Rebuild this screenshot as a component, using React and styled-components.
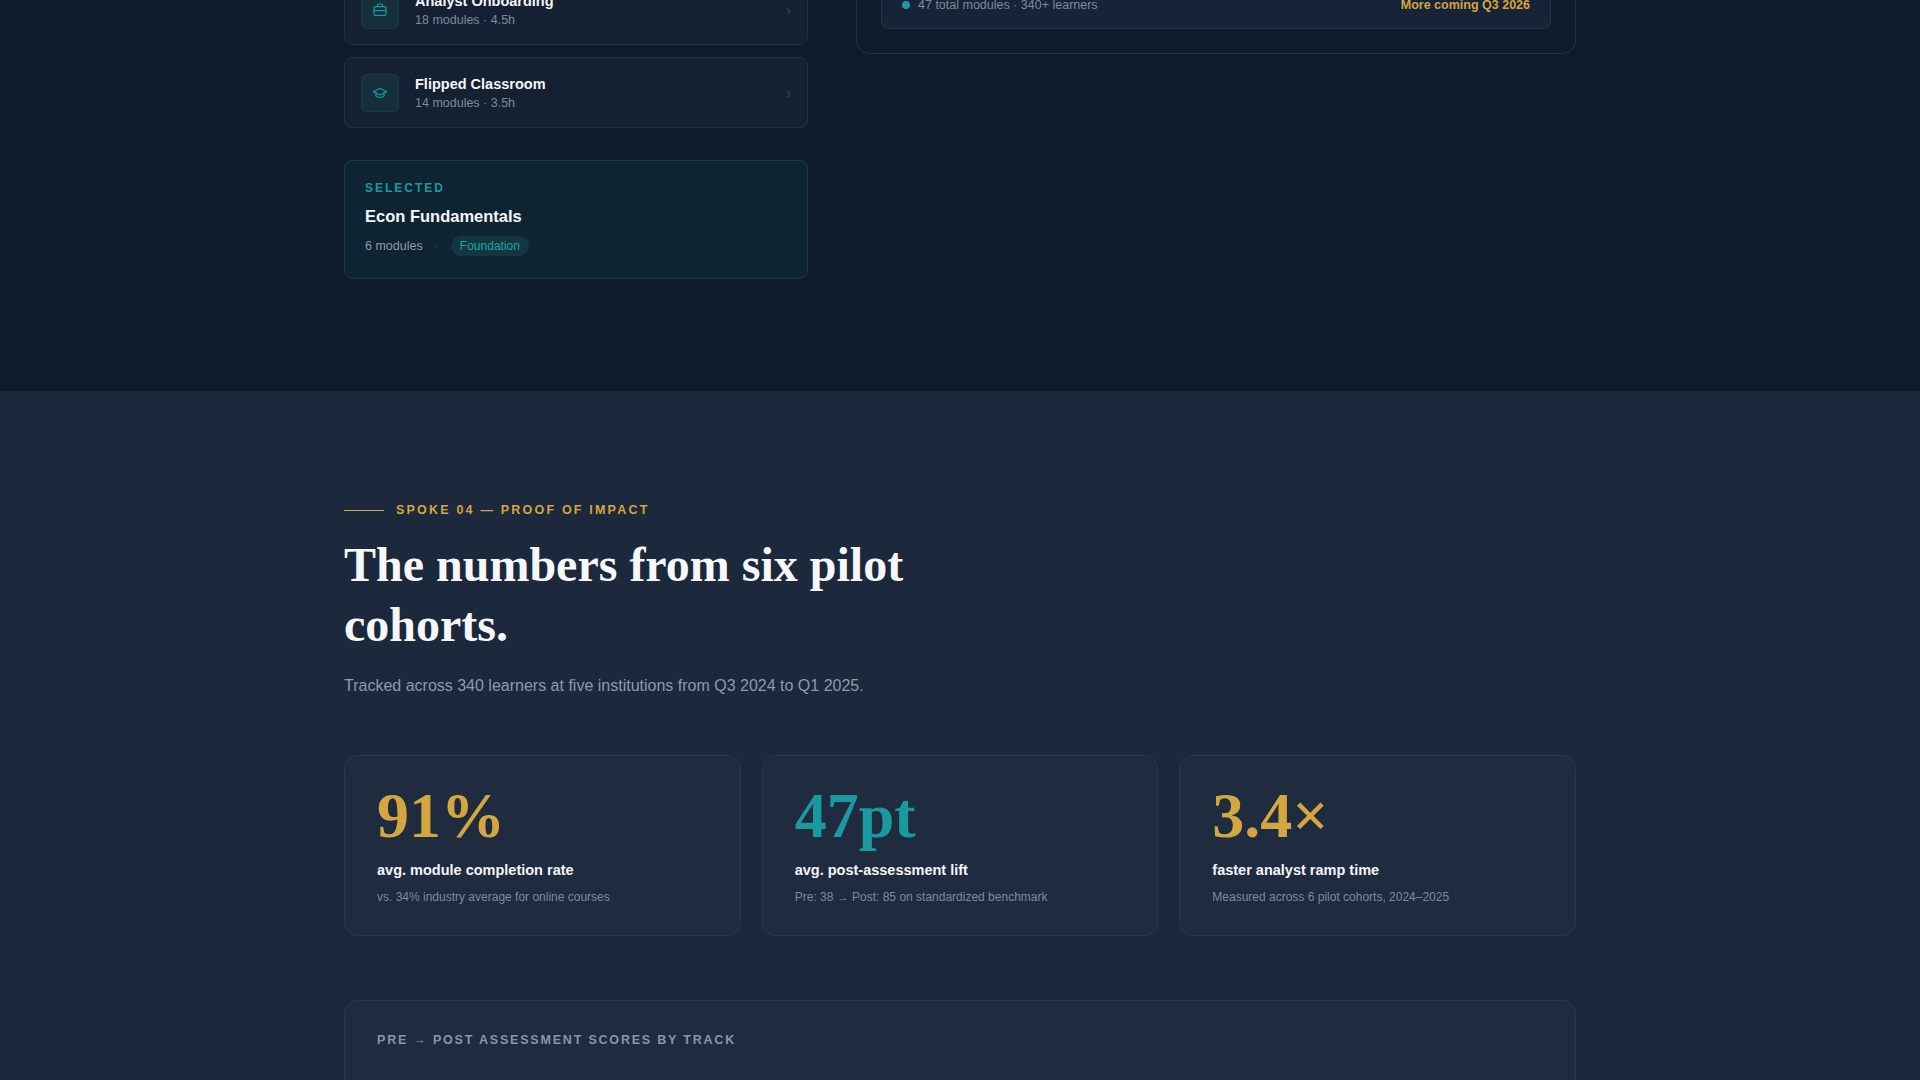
import styled, { createGlobalStyle } from "styled-components";

const Global = createGlobalStyle`
  body { margin: 0; background: #1c283b; font-family: "Liberation Sans", Arial, sans-serif; }
`;

const Page = styled.div`
  margin-top: -26px;
  overflow: hidden;
`;

const Dark = styled.section`
  background: #0f1a2b;
  padding-bottom: 112px;
`;

const Container = styled.div`
  width: 1232px;
  margin: 0 auto;
`;

const Split = styled.div`
  display: grid;
  grid-template-columns: 464px 720px;
  gap: 48px;
  align-items: start;
`;

const Stack = styled.div`
  display: flex;
  flex-direction: column;
  gap: 12px;
`;

const TrackRow = styled.div`
  display: flex;
  align-items: center;
  gap: 16px;
  height: 71px;
  padding: 0 16px;
  box-sizing: border-box;
  border: 1px solid #223047;
  border-radius: 8px;
  background: #152133;
`;

const IconBox = styled.div`
  width: 36px;
  height: 36px;
  border-radius: 6px;
  background: #15303a;
  border: 1px solid #1d3a45;
  display: flex;
  align-items: center;
  justify-content: center;
  color: #1a9aa0;
`;

const TrackText = styled.div`
  flex: 1;
  display: flex;
  flex-direction: column;
  gap: 4px;
  h4 { margin: 0; color: #f4f6fa; font-size: 14.5px; font-weight: 700; }
  span { color: #7e8a9c; font-size: 12.5px; }
`;

const Chevron = styled.span`
  color: #3a4658;
  font-size: 14px;
`;

const Selected = styled.div`
  margin-top: 20px;
  padding: 20px 20px 22px;
  border: 1px solid #173a44;
  border-radius: 8px;
  background: #0f2433;
  small { display: block; color: #1a9aa0; font-size: 12px; font-weight: 700; letter-spacing: 2px; }
  h3 { margin: 12px 0 10px; color: #f4f6fa; font-size: 16.5px; font-weight: 700; }
`;

const Meta = styled.div`
  display: flex;
  align-items: center;
  gap: 12px;
  color: #8d98a8;
  font-size: 12.5px;
  i { color: #3a4658; font-style: normal; }
`;

const Pill = styled.span`
  background: #143640;
  color: #1fa3a8;
  padding: 3px 9px;
  border-radius: 10px;
  font-size: 12px;
`;

const Panel = styled.div`
  border: 1px solid #223047;
  border-top: none;
  border-radius: 0 0 14px 14px;
  padding: 0 24px 24px;
`;

const PanelFoot = styled.div`
  display: flex;
  justify-content: space-between;
  align-items: center;
  padding: 24px 20px 16px;
  border: 1px solid #263449;
  border-top: none;
  border-radius: 0 0 8px 8px;
  background: #172336;
  font-size: 12.5px;
  color: #7e8a9c;
  b { color: #d4a63f; font-size: 12.5px; }
`;

const Dot = styled.span`
  display: inline-block;
  width: 8px;
  height: 8px;
  border-radius: 50%;
  background: #1a9aa0;
  margin-right: 8px;
`;

const Light = styled.section`
  background: #1c283b;
  padding: 112px 0 0;
`;

const Eyebrow = styled.div`
  display: flex;
  align-items: center;
  gap: 12px;
  color: #d4a63f;
  font-size: 12.5px;
  font-weight: 700;
  letter-spacing: 2.2px;
  &::before { content: ""; width: 40px; height: 1px; background: #d4a63f; }
`;

const Heading = styled.h2`
  margin: 18px 0 0;
  max-width: 700px;
  font-family: "Liberation Serif", "Times New Roman", serif;
  font-size: 48px;
  line-height: 60px;
  color: #f6f7fa;
  font-weight: 700;
`;

const Lead = styled.p`
  margin: 22px 0 0;
  color: #8f9aab;
  font-size: 16px;
`;

const Stats = styled.div`
  display: grid;
  grid-template-columns: repeat(3, 1fr);
  gap: 21px;
  margin-top: 60px;
`;

const StatCard = styled.div`
  height: 181px;
  box-sizing: border-box;
  padding: 28px 32px;
  border: 1px solid #2b384d;
  border-radius: 14px;
  background: #1f2b3e;
`;

const Big = styled.div`
  font-family: "Liberation Serif", "Times New Roman", serif;
  font-weight: 700;
  font-size: 64px;
  line-height: 64px;
  color: ${(p) => p.$color};
`;

const StatLabel = styled.div`
  margin-top: 14px;
  color: #f4f6fa;
  font-size: 14.5px;
  font-weight: 700;
`;

const StatDesc = styled.div`
  margin-top: 12px;
  color: #7e8a9c;
  font-size: 12px;
`;

const Chart = styled.div`
  margin-top: 64px;
  height: 120px;
  padding: 32px;
  box-sizing: border-box;
  border: 1px solid #2b384d;
  border-bottom: none;
  border-radius: 14px 14px 0 0;
  background: #1f2b3e;
  color: #8a95a6;
  font-size: 12.5px;
  font-weight: 700;
  letter-spacing: 1.8px;
`;

const Cap = () => (
  <svg width="16" height="16" viewBox="0 0 24 24" fill="none" stroke="currentColor" strokeWidth="1.8" strokeLinecap="round" strokeLinejoin="round">
    <path d="M22 10 12 5 2 10l10 5 10-5z" />
    <path d="M6 12v5c3 2 9 2 12 0v-5" />
  </svg>
);

const Case = () => (
  <svg width="16" height="16" viewBox="0 0 24 24" fill="none" stroke="currentColor" strokeWidth="1.8" strokeLinecap="round" strokeLinejoin="round">
    <rect x="3" y="7" width="18" height="13" rx="2" />
    <path d="M8 7V5a2 2 0 0 1 2-2h4a2 2 0 0 1 2 2v2M3 13h18" />
  </svg>
);

const tracks = [
  { name: "Analyst Onboarding", meta: "18 modules · 4.5h", icon: <Case /> },
  { name: "Flipped Classroom", meta: "14 modules · 3.5h", icon: <Cap /> },
];

const stats = [
  { v: "91%", c: "#d4a63f", l: "avg. module completion rate", d: "vs. 34% industry average for online courses" },
  { v: "47pt", c: "#1a9aa0", l: "avg. post-assessment lift", d: "Pre: 38 → Post: 85 on standardized benchmark" },
  { v: "3.4×", c: "#d4a63f", l: "faster analyst ramp time", d: "Measured across 6 pilot cohorts, 2024–2025" },
];

export default function App() {
  return (
    <Page>
      <Global />
      <Dark>
        <Container>
          <Split>
            <Stack>
              {tracks.map((t) => (
                <TrackRow key={t.name}>
                  <IconBox>{t.icon}</IconBox>
                  <TrackText>
                    <h4>{t.name}</h4>
                    <span>{t.meta}</span>
                  </TrackText>
                  <Chevron>›</Chevron>
                </TrackRow>
              ))}
              <Selected>
                <small>SELECTED</small>
                <h3>Econ Fundamentals</h3>
                <Meta>
                  6 modules <i>·</i> <Pill>Foundation</Pill>
                </Meta>
              </Selected>
            </Stack>
            <Panel>
              <PanelFoot>
                <span><Dot />47 total modules · 340+ learners</span>
                <b>More coming Q3 2026</b>
              </PanelFoot>
            </Panel>
          </Split>
        </Container>
      </Dark>
      <Light>
        <Container>
          <Eyebrow>SPOKE 04 — PROOF OF IMPACT</Eyebrow>
          <Heading>The numbers from six pilot cohorts.</Heading>
          <Lead>Tracked across 340 learners at five institutions from Q3 2024 to Q1 2025.</Lead>
          <Stats>
            {stats.map((s) => (
              <StatCard key={s.v}>
                <Big $color={s.c}>{s.v}</Big>
                <StatLabel>{s.l}</StatLabel>
                <StatDesc>{s.d}</StatDesc>
              </StatCard>
            ))}
          </Stats>
          <Chart>PRE → POST ASSESSMENT SCORES BY TRACK</Chart>
        </Container>
      </Light>
    </Page>
  );
}
